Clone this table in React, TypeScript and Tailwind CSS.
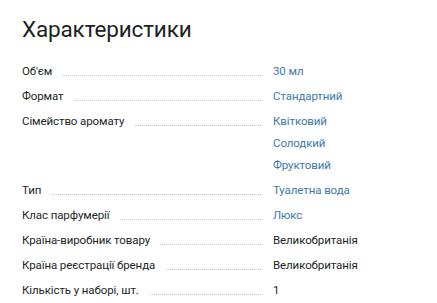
const specs: { label: string; values: string[]; link?: boolean }[] = [
  { label: "Об'єм", values: ["30 мл"], link: true },
  { label: "Формат", values: ["Стандартний"], link: true },
  { label: "Сімейство аромату", values: ["Квітковий", "Солодкий", "Фруктовий"], link: true },
  { label: "Тип", values: ["Туалетна вода"], link: true },
  { label: "Клас парфумерії", values: ["Люкс"], link: true },
  { label: "Країна-виробник товару", values: ["Великобританія"] },
  { label: "Країна реєстрації бренда", values: ["Великобританія"] },
  { label: "Кількість у наборі, шт.", values: ["1"] },
];

export default function App() {
  return (
    <main
      className="bg-white w-[437px] h-[303px] overflow-hidden pl-[22px] pt-[14px] text-[#221f1f]"
      style={{ fontFamily: "Roboto, 'Noto Sans', sans-serif" }}
    >
      <h2 className="text-[22.5px] leading-[30px] font-normal tracking-[-0.15px]">Характеристики</h2>
      <dl className="mt-[16px] flex flex-col gap-[3px] text-[11.5px] leading-[22px] tracking-[-0.1px]">
        {specs.map((s) => (
          <div key={s.label} className="flex">
            <dt className="w-[239px] h-[22px] flex items-end shrink-0">
              <span className="whitespace-nowrap">{s.label}</span>
              <span className="flex-1 ml-[11px] mb-[6px] border-b border-dotted border-[#c5c5c5]" />
            </dt>
            <dd className="ml-[12px] flex flex-col">
              {s.values.map((v) => (
                <span key={v} className={s.link ? "text-[#3e77aa]" : "text-[#221f1f]"}>
                  {v}
                </span>
              ))}
            </dd>
          </div>
        ))}
      </dl>
    </main>
  );
}
